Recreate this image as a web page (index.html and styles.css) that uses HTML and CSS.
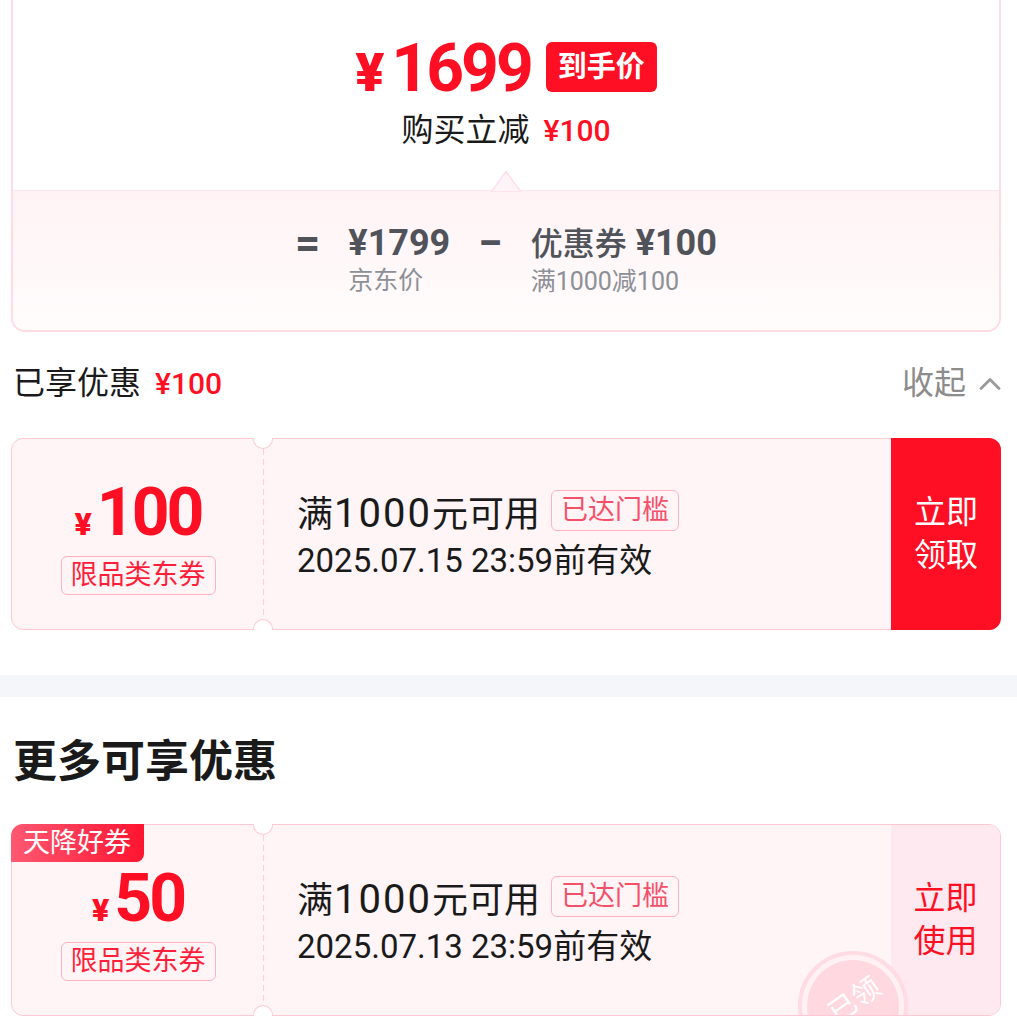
FILE: index.html
```html
<!DOCTYPE html>
<html lang="zh-CN">
<head>
<meta charset="utf-8">
<title>优惠明细</title>
<link rel="stylesheet" href="styles.css">
</head>
<body>
  <section class="summary">
    <div class="summary-top">
      <div class="price-row">
        <span class="price"><span class="price-yen">¥</span>1699</span>
        <span class="price-tag">到手价</span>
      </div>
      <div class="save">购买立减<span class="red save-amt">¥100</span></div>
    </div>
    <div class="summary-bottom">
      <svg class="arrow" width="32" height="22" viewBox="0 0 32 22"><polygon points="1,22 16,1.5 31,22" fill="#fff4f7" stroke="#ffe0e8" stroke-width="1.6"/></svg>
      <span class="op">=</span>
      <div class="term">
        <div class="term-main">¥1799</div>
        <div class="term-sub">京东价</div>
      </div>
      <span class="op">−</span>
      <div class="term">
        <div class="term-main"><span class="term-label">优惠券</span> ¥100</div>
        <div class="term-sub">满1000减100</div>
      </div>
    </div>
  </section>

  <div class="enjoyed">
    <div class="enjoyed-title">已享优惠<span class="red enjoyed-amt">¥100</span></div>
    <div class="collapse">收起<svg class="chev" width="22" height="14" viewBox="0 0 22 14"><polyline points="2,12.5 11,3.5 20,12.5" fill="none" stroke="#9a9a9a" stroke-width="2.8" stroke-linecap="round" stroke-linejoin="round"/></svg></div>
  </div>

  <div class="coupon first">
    <div class="c-left">
      <div class="c-amount"><span class="c-yen">¥</span>100</div>
      <div class="c-type">限品类东券</div>
    </div>
    <div class="c-mid">
      <div class="c-cond"><span>满<span class="num">1000</span>元可用</span><span class="c-reach">已达门槛</span></div>
      <div class="c-date">2025.07.15 23:59前有效</div>
    </div>
    <div class="c-btn solid">立即<br>领取</div>
    <span class="notch notch-top"></span>
    <span class="notch notch-bottom"></span>
  </div>

  <div class="band"></div>

  <h2 class="more-title">更多可享优惠</h2>

  <div class="coupon second">
    <div class="c-left">
      <div class="c-amount"><span class="c-yen">¥</span>50</div>
      <div class="c-type">限品类东券</div>
    </div>
    <div class="c-mid">
      <div class="c-cond"><span>满<span class="num">1000</span>元可用</span><span class="c-reach">已达门槛</span></div>
      <div class="c-date">2025.07.13 23:59前有效</div>
    </div>
    <div class="c-btn light">立即<br>使用</div>
    <span class="notch notch-top"></span>
    <span class="notch notch-bottom"></span>
    <span class="c-tag">天降好券</span>
    <div class="stamp-clip">
      <div class="stamp"><div class="stamp-in"><span>已领</span></div></div>
    </div>
  </div>
</body>
</html>
```

FILE: styles.css
```css
* { box-sizing: border-box; }

body {
  margin: 0;
  background: #fff;
  font-family: Roboto, "Noto Sans CJK SC", sans-serif;
  color: #1a1a1a;
}

.red { color: #ff0f23; }

/* summary card */
.summary {
  margin: -20px 16px 0 11px;
  border: 2px solid #ffdbe4;
  border-radius: 14px;
  overflow: hidden;
}

.summary-top {
  background: #fff;
  padding: 60px 0 41px;
  text-align: center;
}

.price-row {
  display: flex;
  justify-content: center;
  align-items: flex-start;
  gap: 15px;
  height: 50px;
}

.price {
  color: #ff0f23;
  font-weight: 700;
  font-size: 66px;
  line-height: 54px;
  letter-spacing: -3px;
}

.price-yen {
  font-size: 54px;
  line-height: 1;
  letter-spacing: 0;
  margin-right: 7px;
  font-weight: 900;
}

.price-tag {
  background: #ff0f23;
  color: #fff;
  font-size: 29px;
  font-weight: 700;
  height: 50px;
  line-height: 50px;
  padding: 0 12px;
  border-radius: 6px;
}

.save {
  margin-top: 20px;
  font-size: 32px;
  line-height: 36px;
  color: #1a1a1a;
}

.save-amt {
  font-size: 30px;
  font-weight: 500;
  margin-left: 14px;
}

.summary-bottom {
  position: relative;
  display: flex;
  justify-content: center;
  gap: 28px;
  padding: 30px 0 32px;
  border-top: 1px solid #ffe6ec;
  background: linear-gradient(#fff3f6, #fffcfc);
}

.arrow {
  position: absolute;
  left: 50%;
  top: -21px;
  transform: translateX(-50%);
}

.op {
  font-size: 44px;
  font-weight: 700;
  line-height: 44px;
  color: #50535a;
}

.term-main {
  font-size: 36px;
  font-weight: 700;
  line-height: 44px;
  color: #50535a;
  white-space: nowrap;
}

.term-label {
  font-size: 32px;
  font-weight: 500;
}

.term-sub {
  font-size: 25px;
  line-height: 32px;
  color: #8d9097;
  white-space: nowrap;
}

/* enjoyed row */
.enjoyed {
  display: flex;
  justify-content: space-between;
  align-items: center;
  height: 40px;
  margin: 31px 16px 0 13px;
}

.enjoyed-title {
  font-size: 32px;
  line-height: 40px;
}

.enjoyed-amt {
  font-size: 30px;
  font-weight: 500;
  margin-left: 14px;
}

.collapse {
  display: flex;
  align-items: center;
  font-size: 32px;
  line-height: 40px;
  color: #8c8c8c;
}

.chev { margin-left: 13px; }

/* coupon */
.coupon {
  position: relative;
  display: flex;
  height: 192px;
  margin: 35px 16px 0 11px;
  border: 1px solid #ffc8d4;
  border-radius: 12px;
  background: #fff4f6;
}

.coupon.second { margin-top: 37px; }

.c-left {
  flex: none;
  width: 252px;
  display: flex;
  flex-direction: column;
  align-items: center;
  padding-top: 41px;
  background-image: linear-gradient(#ffd0da 60%, transparent 0);
  background-size: 1px 10px;
  background-position: right top;
  background-repeat: repeat-y;
}

.c-amount {
  color: #ff0f23;
  font-weight: 700;
  font-size: 66px;
  line-height: 66px;
  letter-spacing: -3px;
  white-space: nowrap;
}

.c-yen {
  font-size: 32px;
  line-height: 1;
  font-weight: 900;
  letter-spacing: 0;
  margin-right: 5px;
}

.c-type {
  margin-top: 10px;
  border: 1px solid #ffb3c2;
  border-radius: 6px;
  color: #ff1f3a;
  font-size: 27px;
  line-height: 37px;
  padding: 0 9px;
  white-space: nowrap;
}

.c-mid {
  flex: 1;
  padding: 51px 0 0 33px;
}

.c-cond {
  display: flex;
  align-items: center;
  gap: 11px;
  height: 41px;
  font-size: 36px;
  color: #1a1a1a;
  white-space: nowrap;
}

.c-cond .num {
  font-size: 40px;
  line-height: 1;
  letter-spacing: 2px;
  margin-left: 1px;
}

.c-reach {
  border: 1px solid #ffb3c2;
  border-radius: 6px;
  color: #f5506a;
  font-size: 27px;
  line-height: 39px;
  padding: 0 9px;
}

.c-date {
  margin-top: 10px;
  font-size: 33px;
  line-height: 40px;
  color: #1a1a1a;
  white-space: nowrap;
}

.c-btn {
  flex: none;
  width: 110px;
  margin: -1px -1px -1px 0;
  display: flex;
  align-items: center;
  justify-content: center;
  text-align: center;
  font-size: 32px;
  line-height: 43px;
  border-radius: 0 12px 12px 0;
}

.c-btn.solid {
  background: #ff0f23;
  color: #fff;
}

.c-btn.light {
  margin: 0;
  width: 109px;
  background: #ffe9f0;
  color: #ff0f23;
  border-radius: 0 11px 11px 0;
}

.notch {
  position: absolute;
  left: 241px;
  width: 20px;
  height: 11px;
  background: #fff;
  border: 1px solid #ffc8d4;
}

.notch-top {
  top: -1px;
  border-top: none;
  border-radius: 0 0 10px 10px;
}

.notch-bottom {
  bottom: -1px;
  border-bottom: none;
  border-radius: 10px 10px 0 0;
}

.c-tag {
  position: absolute;
  left: -1px;
  top: -1px;
  height: 38px;
  line-height: 38px;
  padding: 0 13px 0 12px;
  font-size: 27px;
  color: #fff;
  background: linear-gradient(90deg, #ff5872, #ff1430);
  border-radius: 12px 0 8px 0;
}

.stamp-clip {
  position: absolute;
  inset: 0;
  overflow: hidden;
  border-radius: 11px;
  pointer-events: none;
}

.stamp {
  position: absolute;
  left: 786px;
  top: 126px;
  width: 110px;
  height: 110px;
  border-radius: 50%;
  border: 4px solid #ffdbe3;
  background: #fff1f4;
  display: flex;
  align-items: center;
  justify-content: center;
  opacity: 0.95;
}

.stamp-in {
  width: 92px;
  height: 92px;
  border-radius: 50%;
  background: #ffd6df;
  display: flex;
  align-items: center;
  justify-content: center;
  padding-bottom: 16px;
  color: #fff;
  font-size: 28px;
}

.stamp-in span {
  display: block;
  transform: rotate(-35deg);
}

/* second section */
.band {
  height: 22px;
  margin-top: 45px;
  background: #f5f6fa;
}

.more-title {
  margin: 40px 13px 0;
  font-size: 44px;
  font-weight: 700;
  line-height: 50px;
}
```
